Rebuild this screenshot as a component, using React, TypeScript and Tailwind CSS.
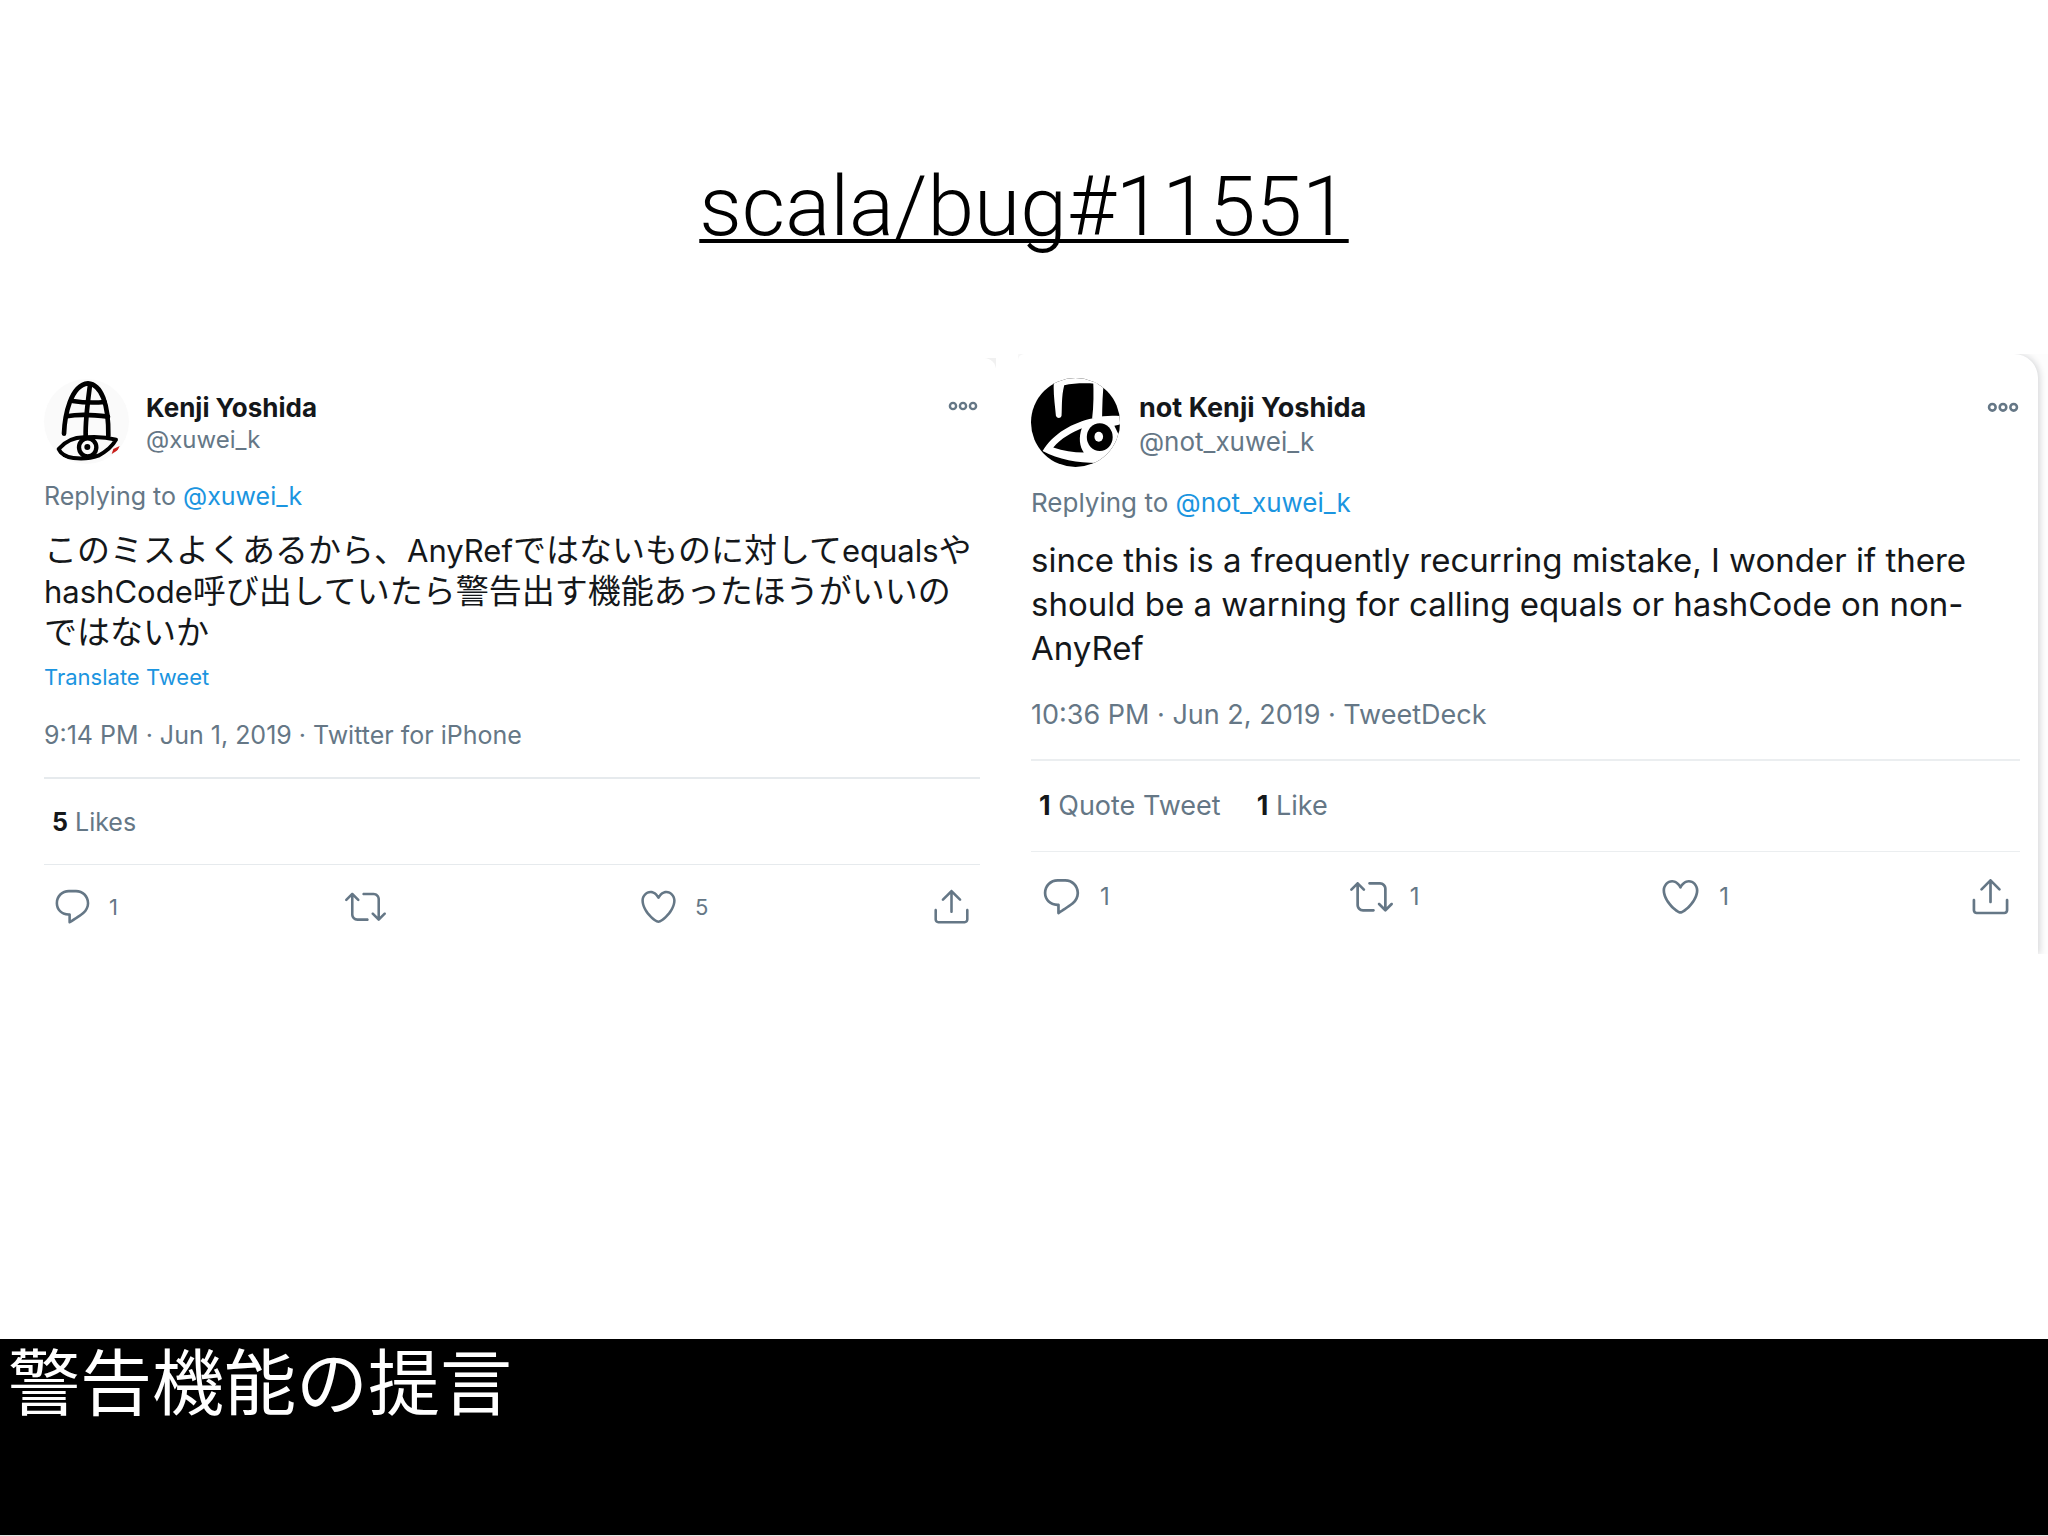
import type { ReactNode } from "react";

const REPLY =
  "M14.046 2.242l-4.148-.01h-.002c-4.374 0-7.8 3.427-7.8 7.802 0 4.098 3.186 7.206 7.465 7.37v3.828c0 .108.044.286.12.403.142.225.384.347.632.347.138 0 .277-.038.402-.118.264-.168 6.473-4.14 8.088-5.506 1.902-1.61 3.04-3.97 3.043-6.312v-.017c-.006-4.367-3.43-7.787-7.8-7.788zm3.787 12.972c-1.134.96-4.862 3.405-6.772 4.643V16.67c0-.414-.335-.75-.75-.75h-.396c-3.66 0-6.318-2.476-6.318-5.886 0-3.534 2.768-6.302 6.3-6.302l4.147.01h.002c3.532 0 6.3 2.766 6.302 6.296-.003 1.91-.942 3.844-2.514 5.176z";
const RETWEET =
  "M23.77 15.67c-.292-.293-.767-.293-1.06 0l-2.22 2.22V7.65c0-2.068-1.683-3.75-3.75-3.75h-5.85c-.414 0-.75.336-.75.75s.336.75.75.75h5.85c1.24 0 2.25 1.01 2.25 2.25v10.24l-2.22-2.22c-.293-.293-.768-.293-1.06 0s-.294.768 0 1.06l3.5 3.5c.145.147.337.22.53.22s.383-.072.53-.22l3.5-3.5c.294-.292.294-.767 0-1.06zm-10.66 3.28H7.26c-1.24 0-2.25-1.01-2.25-2.25V6.46l2.22 2.22c.148.147.34.22.532.22s.384-.073.53-.22c.293-.293.293-.768 0-1.06l-3.5-3.5c-.293-.294-.768-.294-1.06 0l-3.5 3.5c-.294.292-.294.767 0 1.06s.767.293 1.06 0l2.22-2.22V16.7c0 2.068 1.683 3.75 3.75 3.75h5.85c.414 0 .75-.336.75-.75s-.337-.75-.75-.75z";
const HEART =
  "M12 21.638h-.014C9.403 21.59 1.95 14.856 1.95 8.478c0-3.064 2.525-5.754 5.403-5.754 2.29 0 3.83 1.58 4.646 2.73.814-1.148 2.354-2.73 4.645-2.73 2.88 0 5.404 2.69 5.404 5.755 0 6.376-7.454 13.11-10.037 13.157H12zM7.354 4.225c-2.08 0-3.903 1.988-3.903 4.255 0 5.74 7.034 11.596 8.55 11.658 1.518-.062 8.55-5.917 8.55-11.658 0-2.267-1.823-4.255-3.903-4.255-2.528 0-3.94 2.936-3.952 2.965-.23.562-1.156.562-1.387 0-.014-.03-1.425-2.965-3.954-2.965z";
const SHARE =
  "M17.53 7.47l-5-5c-.293-.293-.768-.293-1.06 0l-5 5c-.294.293-.294.768 0 1.06s.767.294 1.06 0l3.72-3.72V15c0 .414.336.75.75.75s.75-.336.75-.75V4.81l3.72 3.72c.146.147.338.22.53.22s.384-.072.53-.22c.293-.293.293-.767 0-1.06zM19.708 21.944H4.292C3.028 21.944 2 20.916 2 19.652V14c0-.414.336-.75.75-.75s.75.336.75.75v5.652c0 .437.355.792.792.792h15.416c.437 0 .792-.355.792-.792V14c0-.414.336-.75.75-.75s.75.336.75.75v5.652c0 1.264-1.028 2.292-2.292 2.292z";

function Action({ label, path, size, count, countClass }: { label: string; path: string; size: string; count?: string; countClass: string }) {
  return (
    <button type="button" aria-label={label} className={`flex cursor-pointer items-center justify-self-start ${countClass}`}>
      <svg viewBox="0 0 24 24" className={size} fill="currentColor" aria-hidden="true">
        <path d={path} />
      </svg>
      {count && <span>{count}</span>}
    </button>
  );
}

function MoreButton({ className }: { className: string }) {
  return (
    <button type="button" aria-label="More" className={`ml-auto cursor-pointer self-start ${className}`}>
      <svg viewBox="0 0 30 10" className="w-full" fill="none" stroke="currentColor" strokeWidth="2.4" aria-hidden="true">
        <circle cx="5" cy="5" r="3.1" />
        <circle cx="15" cy="5" r="3.1" />
        <circle cx="25" cy="5" r="3.1" />
      </svg>
    </button>
  );
}

function HelmetAvatar() {
  return (
    <svg viewBox="42 86 255 255" className="size-[85px] shrink-0 rounded-full bg-[#fafafa]" fill="none" stroke="#000" strokeLinecap="round" strokeLinejoin="round" aria-hidden="true">
      <g strokeWidth="14">
        <path d="M102 250C104 195 122 104 174 99C214 102 236 160 235 256" />
        <path d="M180 104C174 150 166 205 167 256" />
        <path d="M128 152C160 157 190 158 224 155" />
        <path d="M110 198C148 190 190 193 234 199" />
      </g>
      <path strokeWidth="12" d="M86 296C108 270 138 259 170 261C200 259 235 262 258 268C246 290 226 305 205 316C180 325 150 325 130 323C105 320 92 310 86 296Z" />
      <ellipse cx="173" cy="291" rx="26" ry="27" strokeWidth="13" />
      <circle cx="172" cy="290" r="9" fill="#000" stroke="none" />
      <path d="M245 311L250 296L269 287L263 300Z" fill="#c9201c" stroke="none" />
    </svg>
  );
}

function InvertedAvatar() {
  return (
    <svg viewBox="63 82 268 268" className="size-[89px] shrink-0 rounded-full" aria-hidden="true">
      <rect x="63" y="82" width="268" height="268" fill="#000" />
      <g fill="#fff">
        <path d="M133 80H285L283 104C250 96 200 96 163 104C154 140 157 170 155 196C152 205 142 205 138 196C135 160 128 120 133 80Z" />
        <path d="M250 84H284C278 125 278 165 277 205H247C252 165 252 125 250 84Z" />
        <path d="M98 302C128 250 190 215 250 203C285 194 315 194 340 198V300L262 338C205 338 145 328 98 302Z" />
      </g>
      <path d="M130 291C155 262 185 246 216 233C206 260 209 288 222 306C190 306 160 302 130 291Z" />
      <ellipse cx="270" cy="260" rx="39" ry="42" />
      <ellipse cx="267" cy="259" rx="13" ry="15" fill="#fff" />
      <path d="M314 226L331 222V250L325 248Z" />
    </svg>
  );
}

function Latin({ children }: { children: ReactNode }) {
  return <span className="text-[31px] leading-none">{children}</span>;
}

function OriginalTweet() {
  return (
    <div className="mt-1 self-start bg-[#f1f1f1]">
      <article className="rounded-tr-xl bg-white pt-[21px] pr-4 pl-11 text-[25px] leading-8 text-[#657786]">
        <header className="flex">
          <HelmetAvatar />
          <div className="mt-3 ml-[17px]">
            <h2 className="text-[26px] leading-[33px] font-bold text-[#14171a]">Kenji Yoshida</h2>
            <p className="text-2xl leading-8">@xuwei_k</p>
          </div>
          <MoreButton className="mt-[22px] mr-0.5 w-[30px]" />
        </header>
        <p className="mt-4">
          Replying to <a href="#xuwei_k" className="text-[#1b95e0]">@xuwei_k</a>
        </p>
        <p lang="ja" className="mt-[18px] text-[33px] leading-[41px] text-[#14171a]">
          このミスよくあるから、<Latin>AnyRef</Latin>ではないものに対して<Latin>equals</Latin>や<Latin>hashCode</Latin>呼び出していたら警告出す機能あったほうがいいのではないか
        </p>
        <a href="#translate" className="mt-[9px] block text-[22px] leading-[30px] text-[#1b95e0]">Translate Tweet</a>
        <p className="mt-[27px]">9:14 PM · Jun 1, 2019 · Twitter for iPhone</p>
        <p className="mt-[26px] border-y border-t-2 border-[#e6eaed] px-2 pt-[27px] pb-[26px]">
          <strong className="text-[#14171a]">5</strong> Likes
        </p>
        <div className="grid grid-cols-[1fr_1fr_1fr_auto] px-2 pt-[21px]">
          <Action label="Reply" path={REPLY} size="size-[41px]" count="1" countClass="gap-4 text-[22px]" />
          <Action label="Retweet" path={RETWEET} size="size-[41px]" countClass="gap-4 text-[22px]" />
          <Action label="Like" path={HEART} size="size-[41px]" count="5" countClass="gap-4 text-[22px]" />
          <Action label="Share" path={SHARE} size="size-[41px]" countClass="gap-4 text-[22px]" />
        </div>
      </article>
    </div>
  );
}

function TranslatedTweet() {
  return (
    <div className="overflow-hidden bg-[#fdfdfd] pr-2.5">
      <article className="rounded-tl-md rounded-tr-3xl bg-white pt-6 pr-[18px] pb-9 pl-[13px] text-[26px] leading-[34px] text-[#657786] shadow-[2px_0_6px_rgba(20,23,40,0.16)]">
        <header className="flex">
          <InvertedAvatar />
          <div className="mt-[13px] ml-[19px]">
            <h2 className="text-[27px] font-bold text-[#14171a]">not Kenji Yoshida</h2>
            <p>@not_xuwei_k</p>
          </div>
          <MoreButton className="mt-6 mr-px w-8" />
        </header>
        <p className="mt-[19px]">
          Replying to <a href="#not_xuwei_k" className="text-[#1b95e0]">@not_xuwei_k</a>
        </p>
        <p className="mt-[18px] text-[33px] leading-[44px] text-[#14171a]">
          since this is a frequently recurring mistake, I wonder if there should be a warning for calling equals or hashCode on non-AnyRef
        </p>
        <p className="mt-7 text-[27px]">10:36 PM · Jun 2, 2019 · TweetDeck</p>
        <div className="mt-[27px] flex gap-9 border-y border-t-2 border-[#ebeef0] px-2 py-7 text-[27px]">
          <p><strong className="text-[#14171a]">1</strong> Quote Tweet</p>
          <p><strong className="text-[#14171a]">1</strong> Like</p>
        </div>
        <div className="grid grid-cols-[1fr_1fr_1fr_auto] pt-[23px] pr-2 pl-[9px]">
          <Action label="Reply" path={REPLY} size="size-[43px]" count="1" countClass="gap-[17px] text-2xl" />
          <Action label="Retweet" path={RETWEET} size="size-[43px]" count="1" countClass="gap-[17px] text-2xl" />
          <Action label="Like" path={HEART} size="size-[43px]" count="1" countClass="gap-[17px] text-2xl" />
          <Action label="Share" path={SHARE} size="size-[43px]" countClass="gap-[17px] text-2xl" />
        </div>
      </article>
    </div>
  );
}

export default function App() {
  return (
    <div className="flex min-h-screen flex-col bg-white font-[Inter,'Noto_Sans_CJK_JP',sans-serif]">
      <main className="flex-1">
        <h1 className="mt-[157px] mb-[97px] text-center font-[Roboto,sans-serif] text-[84px] leading-[100px] font-light text-black">
          <a href="#11551" className="underline decoration-4 underline-offset-4 [text-decoration-skip-ink:none]">scala/bug#11551</a>
        </h1>
        <div className="grid grid-cols-[996fr_1030fr] gap-[22px]">
          <OriginalTweet />
          <TranslatedTweet />
        </div>
      </main>
      <footer className="h-[197px] border-b border-[#e5e5e5] bg-black px-2 pt-[3px]">
        <p lang="ja" className="font-['Noto_Sans_CJK_JP',sans-serif] text-7xl leading-[72px] text-white">警告機能の提言</p>
      </footer>
    </div>
  );
}
